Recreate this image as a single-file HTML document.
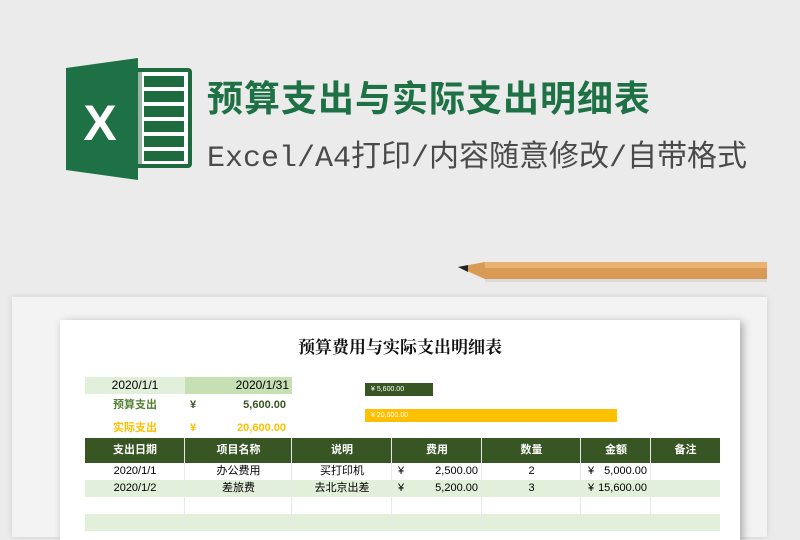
<!DOCTYPE html>
<html><head><meta charset="utf-8"><style>
body{margin:0;width:800px;height:526px;overflow:hidden;background:#ebebeb;font-family:"Liberation Sans","Noto Sans CJK SC",sans-serif;position:relative}
.a{position:absolute}
.t{font-size:11px;color:#222}
.cell{position:absolute;text-align:center;font-size:11px;line-height:17px}
</style></head><body>
<!-- logo -->
<svg class="a" style="left:66px;top:58px" width="128" height="122" viewBox="0 0 128 122">
<rect x="62" y="10" width="64" height="100" rx="4" fill="#1d6b3e"/>
<rect x="66" y="14" width="56" height="92" fill="#fff"/>
<g fill="#1d6b3e"><rect x="78" y="18" width="40" height="11"/><rect x="78" y="33" width="40" height="11"/><rect x="78" y="48" width="40" height="11"/><rect x="78" y="63" width="40" height="11"/><rect x="78" y="78" width="40" height="11"/><rect x="78" y="93" width="40" height="10"/></g>
<rect x="62" y="14" width="14" height="92" fill="#9bb7a4"/>
<path d="M0 10 L72 0 L72 122 L0 112 Z" fill="#1e7145"/>
<text x="34" y="82" font-family="Liberation Sans" font-weight="bold" font-size="50" fill="#fff" text-anchor="middle">X</text>
</svg>
<div class="a" style="left:207px;top:70px;font-size:36px;font-weight:bold;color:#1e7145;letter-spacing:1px;font-family:'Liberation Sans','Noto Sans CJK SC',sans-serif">预算支出与实际支出明细表</div>
<div class="a" style="left:207px;top:131px;font-size:30px;color:#4a4a4a;font-family:'Liberation Mono','Noto Sans CJK SC',monospace;letter-spacing:0px">Excel/A4打印/内容随意修改/自带格式</div>
<!-- pencil -->
<svg class="a" style="left:455px;top:258px" width="315" height="28">
<path d="M3 9 L30 4 L312 4 L312 21 L30 21 Z" fill="#d99a55"/>
<path d="M30 4 L312 4 L312 10 L30 10 Z" fill="#e8b271"/>
<path d="M3 9 L13 7 L13 14 Z" fill="#222"/>
<path d="M30 21 L312 21 L312 24 L30 24Z" fill="#c9c9c9" opacity=".5"/>
</svg>
<!-- back paper -->
<div class="a" style="left:12px;top:297px;width:755px;height:240px;background:#f3f3f3;box-shadow:0 0 6px rgba(0,0,0,.12)"></div>
<div class="a" style="left:60px;top:320px;width:680px;height:220px;background:#fff;box-shadow:3px 2px 8px rgba(0,0,0,.3)"></div>
<div class="a" style="left:60px;top:333px;width:680px;text-align:center;font-size:17px;font-weight:bold;font-family:'Liberation Serif','Noto Serif CJK SC',serif;color:#111">预算费用与实际支出明细表</div>
<div class="a" style="left:85px;top:377px;width:100px;height:17px;background:#e2efda"></div>
<div class="a" style="left:185px;top:377px;width:107px;height:17px;background:#c6e0b4"></div>
<div class="cell" style="left:85px;top:377px;width:100px;font-size:12px">2020/1/1</div>
<div class="cell" style="left:185px;top:377px;width:104px;text-align:right;font-size:12px">2020/1/31</div>
<div class="cell" style="left:85px;top:397px;width:100px;color:#548235;font-weight:bold">预算支出</div>
<div class="cell" style="left:190px;top:397px;color:#375623;font-weight:bold">¥</div>
<div class="cell" style="left:200px;top:397px;width:86px;text-align:right;color:#375623;font-weight:bold">5,600.00</div>
<div class="cell" style="left:85px;top:420px;width:100px;color:#ffc000;font-weight:bold">实际支出</div>
<div class="cell" style="left:190px;top:420px;color:#ffc000;font-weight:bold">¥</div>
<div class="cell" style="left:200px;top:420px;width:86px;text-align:right;color:#ffc000;font-weight:bold">20,600.00</div>
<div class="a" style="left:365px;top:383px;width:68px;height:13px;background:#375623;color:#fff;font-size:7px;line-height:13px;padding-left:6px;box-sizing:border-box">¥ 5,600.00</div>
<div class="a" style="left:365px;top:409px;width:252px;height:13px;background:#ffc000;color:#fff;font-size:7px;line-height:13px;padding-left:6px;box-sizing:border-box">¥ 20,600.00</div>
<!-- table -->
<div class="a" style="left:85px;top:438px;width:635px;height:25px;background:#375623"></div>
<div class="a" style="left:85px;top:480px;width:635px;height:17px;background:#e2efda"></div>
<div class="a" style="left:85px;top:514px;width:635px;height:17px;background:#e2efda"></div>
<div class="a" style="left:184px;top:438px;width:1px;height:90px;background:#e8e8e8"></div>
<div class="a" style="left:291px;top:438px;width:1px;height:90px;background:#e8e8e8"></div>
<div class="a" style="left:391px;top:438px;width:1px;height:90px;background:#e8e8e8"></div>
<div class="a" style="left:481px;top:438px;width:1px;height:90px;background:#e8e8e8"></div>
<div class="a" style="left:580px;top:438px;width:1px;height:90px;background:#e8e8e8"></div>
<div class="a" style="left:650px;top:438px;width:1px;height:90px;background:#e8e8e8"></div>
<div style="color:#fff;font-weight:bold">
<div class="cell" style="left:85px;top:442px;width:100px;color:#fff">支出日期</div>
<div class="cell" style="left:185px;top:442px;width:107px;color:#fff">项目名称</div>
<div class="cell" style="left:292px;top:442px;width:100px;color:#fff">说明</div>
<div class="cell" style="left:392px;top:442px;width:90px;color:#fff">费用</div>
<div class="cell" style="left:482px;top:442px;width:99px;color:#fff">数量</div>
<div class="cell" style="left:581px;top:442px;width:70px;color:#fff">金额</div>
<div class="cell" style="left:651px;top:442px;width:69px;color:#fff">备注</div>
</div>
<div class="cell" style="left:85px;top:463px;width:100px">2020/1/1</div>
<div class="cell" style="left:185px;top:463px;width:107px">办公费用</div>
<div class="cell" style="left:292px;top:463px;width:100px">买打印机</div>
<div class="cell" style="left:398px;top:463px">¥</div>
<div class="cell" style="left:392px;top:463px;width:86px;text-align:right">2,500.00</div>
<div class="cell" style="left:482px;top:463px;width:99px">2</div>
<div class="cell" style="left:588px;top:463px">¥</div>
<div class="cell" style="left:581px;top:463px;width:66px;text-align:right">5,000.00</div>
<div class="cell" style="left:85px;top:480px;width:100px">2020/1/2</div>
<div class="cell" style="left:185px;top:480px;width:107px">差旅费</div>
<div class="cell" style="left:292px;top:480px;width:100px">去北京出差</div>
<div class="cell" style="left:398px;top:480px">¥</div>
<div class="cell" style="left:392px;top:480px;width:86px;text-align:right">5,200.00</div>
<div class="cell" style="left:482px;top:480px;width:99px">3</div>
<div class="cell" style="left:588px;top:480px">¥</div>
<div class="cell" style="left:581px;top:480px;width:66px;text-align:right">15,600.00</div>
</body></html>
